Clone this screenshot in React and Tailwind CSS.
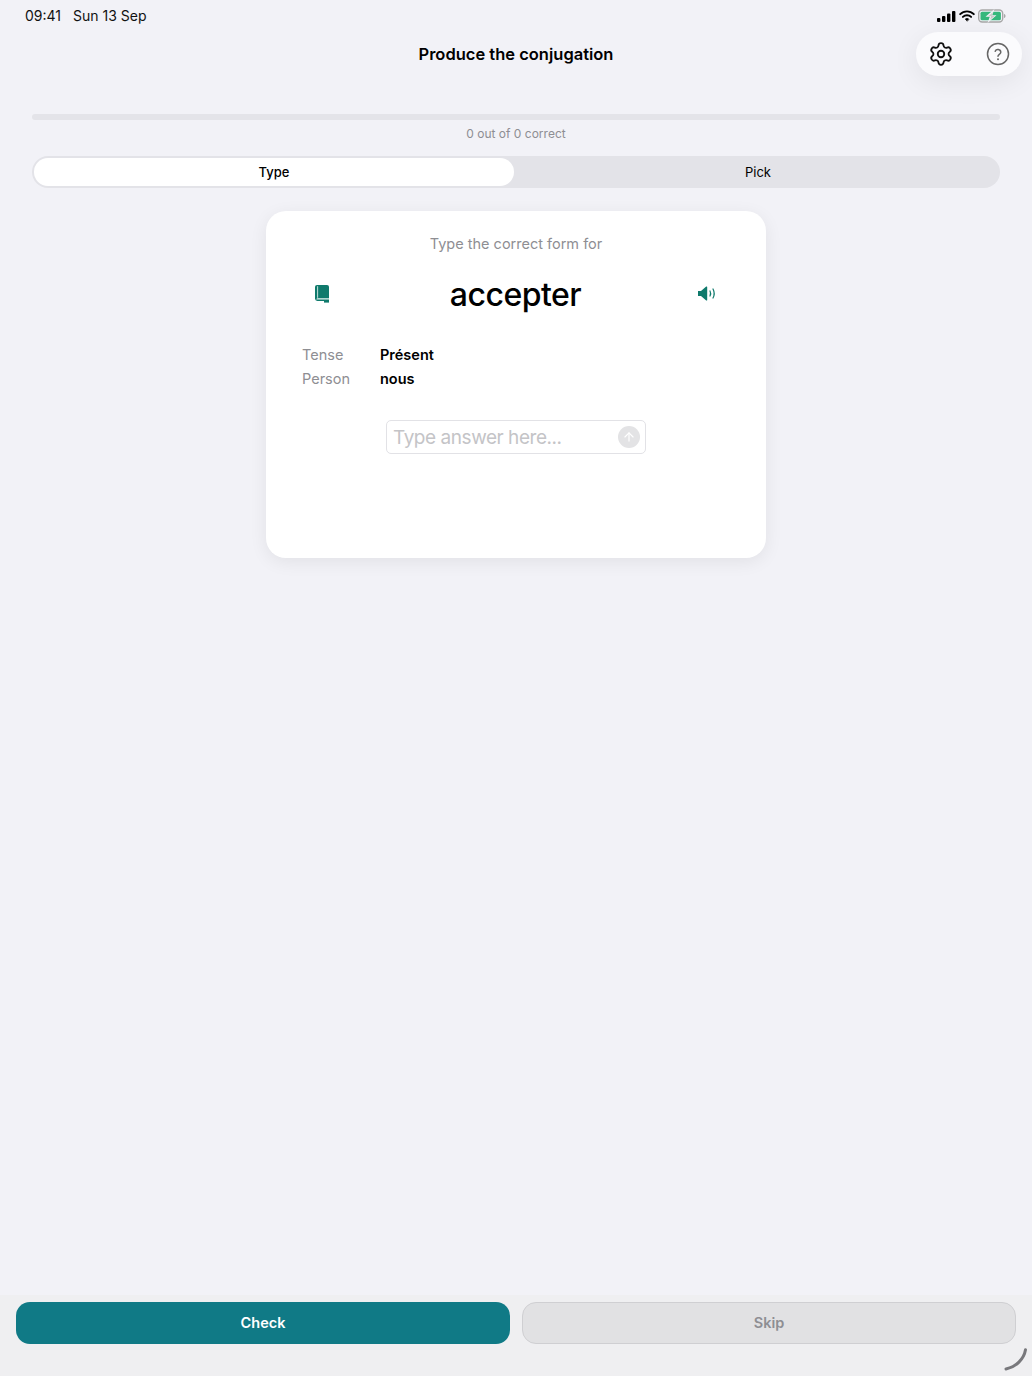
import React from 'react';
import { Settings, ArrowUp } from 'lucide-react';

const StatusIcons = () => (
    <div className="flex items-center gap-[3px]">
        <svg width="19" height="11" viewBox="0 0 19 11" fill="#000">
            <rect x="0" y="7" width="3.4" height="4" rx="1" />
            <rect x="5" y="5" width="3.4" height="6" rx="1" />
            <rect x="10" y="2.5" width="3.4" height="8.5" rx="1" />
            <rect x="15" y="0" width="3.4" height="11" rx="1" />
        </svg>
        <svg width="16" height="12" viewBox="0 0 16 12" fill="none" stroke="#000" strokeLinecap="round">
            <path d="M1.2 4.2a9.6 9.6 0 0 1 13.6 0" strokeWidth="1.9" />
            <path d="M3.9 6.900a5.800 5.800 0 0 1 8.200 0" strokeWidth="1.9" />
            <path d="M8 11 6.200 9.100a2.600 2.600 0 0 1 3.600 0Z" fill="#000" strokeWidth="0.6" />
        </svg>
        <svg width="28" height="14" viewBox="0 0 28 14" fill="none">
            <rect x="0.7" y="1" width="24" height="12" rx="3.5" stroke="#a8a8a8" strokeWidth="1.4" />
            <rect x="2.500" y="2.800" width="20.400" height="8.400" rx="1.500" fill="#35b87c" />
            <path d="M26 5c1 .3 1.500 1 1.500 2s-.5 1.700-1.500 2Z" fill="#a8a8a8" />
            <path d="M16.500 0 7.500 7.800h4.300L9.500 14l9-7.800h-4.300Z" fill="#f2f2f7" />
            <path d="M15 3.200 10 7.300h3.200l-1.200 3.500 5-4.100h-3.200Z" fill="#c9c9c9" />
        </svg>
    </div>
);

const BookIcon = () => (
    <svg width="14" height="18" viewBox="0 0 14 18">
        <path d="M2 0h10a2 2 0 0 1 2 2v14H2.400a2.400 2.400 0 0 1-2.400-2.400V2a2 2 0 0 1 2-2Z" fill="#0f7a6c" />
        <rect x="2.200" y="1.200" width="0.9" height="11.600" fill="#d6ebe7" />
        <path d="M1.200 14.200c.3-.6.8-.9 1.400-.9H14v1.200H2.600c-.6 0-1.100-.1-1.400-.3Z" fill="#e8f3f1" />
        <rect x="9" y="16" width="5" height="1.600" fill="#0f7a6c" />
    </svg>
);

const SpeakerIcon = () => (
    <svg width="19" height="15" viewBox="0 0 19 15" fill="none">
        <path d="M0 5h3l5.200-4.400c.5-.4 1-.1 1 .5v12.800c0 .6-.5.9-1 .5L3 10H0Z" fill="#0f7a6c" />
        <path d="M12 5c.8 1.500.8 3.500 0 5" stroke="#0f7a6c" strokeWidth="1.2" strokeLinecap="round" />
        <path d="M15 3c1.500 2.800 1.500 6.200 0 9" stroke="#0f7a6c" strokeWidth="1.2" strokeLinecap="round" />
    </svg>
);

export default function App() {
    return (
        <div className="relative flex h-[1376px] w-[1032px] flex-col overflow-hidden bg-[#f2f2f7] font-['Inter',sans-serif] text-black">
            {/* status bar */}
            <div className="flex h-[32px] items-center justify-between pl-[25px] pr-[26px] text-[14px] leading-none text-[#111]">
                <div className="flex gap-[10px]">
                    <span className="w-[38px]">09:41</span>
                    <span>Sun 13 Sep</span>
                </div>
                <StatusIcons />
            </div>

            {/* header */}
            <div className="relative flex h-[44px] items-center justify-center">
                <h1 className="text-[16.5px] font-semibold leading-none">Produce the conjugation</h1>
                <div className="absolute right-[10px] top-0 flex h-[44px] w-[106px] items-center justify-between rounded-full bg-[#fbfbfd] pl-[12px] pr-[12px] shadow-[0_6px_28px_rgba(0,0,0,0.07)]">
                    <Settings size={26} strokeWidth={1.7} className="text-[#111]" />
                    <svg width="24" height="24" viewBox="0 0 24 24" fill="none" stroke="#666" strokeWidth="1.5" strokeLinecap="round" strokeLinejoin="round">
                        <circle cx="12" cy="12" r="10.5" />
                        <path d="M9.200 9.300a2.900 2.900 0 0 1 5.600.9c0 1.900-2.800 2.300-2.800 4" />
                        <path d="M12 17.300h.01" strokeWidth="2" />
                    </svg>
                </div>
            </div>

            {/* progress */}
            <div className="mx-[32px] mt-[38px] h-[6px] rounded-full bg-[#e4e4e9]" />
            <p className="mt-[6px] text-center text-[12px] leading-[15px] text-[#8e8e93]">0 out of 0 correct</p>

            {/* type / pick */}
            <div className="mx-[32px] mt-[15px] flex h-[32px] rounded-full bg-[#e3e3e8] p-[2px] text-[13px] font-medium">
                <div className="flex w-[480px] items-center justify-center rounded-full bg-white pt-[1px]">Type</div>
                <div className="flex flex-1 items-center justify-center pl-[4px] pt-[1px] font-normal">Pick</div>
            </div>

            {/* card */}
            <div className="mx-auto mt-[23px] flex h-[347px] w-[500px] flex-col rounded-[20px] bg-white px-[36px] pt-[24px] shadow-[0_4px_18px_rgba(0,0,0,0.07)]">
                <p className="text-center text-[14.5px] leading-[18px] text-[#8e8e93]">Type the correct form for</p>
                <div className="mt-[18px] flex h-[46px] items-center justify-between pl-[13px] pr-[13px]">
                    <BookIcon />
                    <span className="pl-[4px] pt-[1px] text-[32px] font-medium leading-none tracking-[-0.5px]">accepter</span>
                    <span className="mb-[2px]"><SpeakerIcon /></span>
                </div>
                <div className="mt-[28px] grid grid-cols-[78px_1fr] gap-y-[4px] text-[14.5px] leading-[20px]">
                    <span className="text-[#8e8e93]">Tense</span>
                    <span className="font-semibold">Présent</span>
                    <span className="text-[#8e8e93]">Person</span>
                    <span className="font-semibold">nous</span>
                </div>
                <div className="mx-auto mt-[31px] flex h-[34px] w-[260px] items-center justify-between rounded-[5px] border border-[#e2e2e6] pl-[6px] pr-[5px]">
                    <span className="text-[19px] leading-none tracking-[-0.45px] text-[#c4c4c7]">Type answer here...</span>
                    <span className="flex h-[22px] w-[22px] items-center justify-center rounded-full bg-[#e3e3e5]">
                        <ArrowUp size={14} strokeWidth={2} className="text-white" />
                    </span>
                </div>
            </div>

            {/* bottom bar */}
            <div className="relative mt-auto h-[81px] bg-[#efeff1]">
                <div className="flex gap-[12px] px-[16px] pt-[7px]">
                    <button className="flex h-[42px] w-[494px] items-center justify-center rounded-[14px] bg-[#107a86] text-[14.5px] font-semibold text-white">Check</button>
                    <button className="flex h-[42px] w-[494px] items-center justify-center rounded-[14px] border border-[#cfcfd2] bg-[#e1e1e3] text-[14.5px] font-semibold text-[#8e8e93]">Skip</button>
                </div>
                <svg className="absolute bottom-[5px] right-[4px]" width="24" height="23" viewBox="0 0 24 23" fill="none">
                    <path d="M21.500 1.800C20 11 12 19 2 21" stroke="#78787c" strokeWidth="3" strokeLinecap="round" />
                </svg>
            </div>
        </div>
    );
}
